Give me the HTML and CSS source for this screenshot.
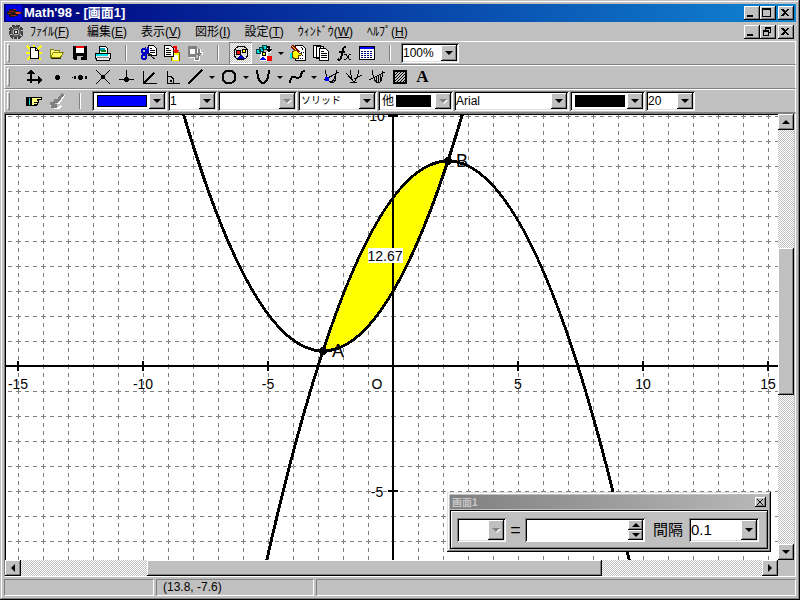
FILE: index.html
```
<!DOCTYPE html>
<html lang="ja">
  <head>
    <meta charset="UTF-8" />
    <meta name="viewport" content="width=device-width, initial-scale=1.0" />
    <title>Math'98 - [画面1]</title>
    <link rel="stylesheet" href="styles.css">
  </head>
  <body>
    <div class="window">
      <header class="titlebar">
        <svg class="logo" width="16" height="16" viewBox="0 0 16 16">
          <rect width="16" height="16" fill="#0000e0" />
          <path d="M1 6h2v-2h7v2h3v1h3v2h-4v2h-3v1h-6v-2h-2z" fill="#181818" />
          <path d="M3 6h5M2 8h3M5 10h5M7 4h3" stroke="#a02010" />
          <path d="M9 7h6M10 8h4" stroke="#e04020" />
        </svg>
        <h1>Math'98 - [画面1]</h1>
        <div class="winbtns">
          <button aria-label="最小化"><svg width="12" height="10"><path d="M2 7h6v2h-6z" /></svg></button>
          <button aria-label="最大化"><svg width="12" height="10"><path d="M1 0h9v9h-9zM2 2v6h7v-6z" fill-rule="evenodd" /></svg></button>
          <button class="close" aria-label="閉じる"><svg width="12" height="10"><path d="M2 1h2l2 2 2-2h2l-3 3.500 3 3.500h-2l-2-2-2 2h-2l3-3.500z" /></svg></button>
        </div>
      </header>

      <nav class="menubar">
        <svg class="gear" width="16" height="16" viewBox="0 0 16 16">
          <circle cx="8" cy="8" r="6" fill="none" stroke="#404040" stroke-width="3" stroke-dasharray="3 1" />
          <circle cx="8" cy="8" r="4" fill="#b0b0b0" stroke="#606060" stroke-width="2" />
          <circle cx="8" cy="8" r="2" fill="#e8e8e8" stroke="#303030" />
        </svg>
        <a href="#" class="file">ﾌｧｲﾙ(<u>F</u>)</a>
        <a href="#">編集(<u>E</u>)</a>
        <a href="#">表示(<u>V</u>)</a>
        <a href="#">図形(<u>I</u>)</a>
        <a href="#">設定(<u>T</u>)</a>
        <a href="#">ｳｨﾝﾄﾞｳ(<u>W</u>)</a>
        <a href="#">ﾍﾙﾌﾟ(<u>H</u>)</a>
        <div class="winbtns">
          <button aria-label="画面を最小化"><svg width="12" height="10"><path d="M2 7h6v2h-6z" /></svg></button>
          <button aria-label="元に戻す"><svg width="12" height="10"><path d="M4 0h6v6h-2v3h-6v-6h2zM5 2v1h3v2h1v-3zM3 5v3h4v-3z" fill-rule="evenodd" /></svg></button>
          <button class="close" aria-label="画面を閉じる"><svg width="12" height="10"><path d="M2 1h2l2 2 2-2h2l-3 3.500 3 3.500h-2l-2-2-2 2h-2l3-3.500z" /></svg></button>
        </div>
      </nav>

      <div class="toolbar">
        <span class="grip"></span>
        <button class="tool" aria-label="新規作成">
          <svg width="16" height="16" viewBox="0 0 16 16">
            <path d="M1 1l4 4M15 1l-4 4M1 15l4-4M15 15l-4-4M8 0v3M0 8h4M12 8h4" stroke="#ff0" stroke-width="2" />
            <path d="M4.500 2.500h5l3 3v8h-8z" fill="#fff" stroke="#000" /><path d="M9.500 2.500v3h3" fill="none" stroke="#000" />
          </svg>
        </button>
        <button class="tool" aria-label="開く">
          <svg width="16" height="16" viewBox="0 0 16 16">
            <path d="M1.500 12.500v-8h3l1 1h5v3" fill="#ffff80" stroke="#808000" />
            <path d="M1.500 12.500l3-5h10l-3 5z" fill="#ffff60" stroke="#808000" />
            <path d="M2 13h10" stroke="#202000" />
          </svg>
        </button>
        <button class="tool" aria-label="保存">
          <svg width="16" height="16" viewBox="0 0 16 16">
            <path d="M1 1h14v14h-13l-1-1z" />
            <path d="M4 1h8v7h-8z" fill="#fff" /><path d="M4 1h8v2h-8z" fill="#f00" /><path d="M5 11h6v4h-6z" fill="#c0c0c0" /><path d="M9 12h2v3h-2z" fill="#000" />
          </svg>
        </button>
        <button class="tool" aria-label="印刷">
          <svg width="16" height="16" viewBox="0 0 16 16">
            <path d="M4.500 1.500h6l2 2v5h-8z" fill="#fff" stroke="#000" />
            <path d="M5 3h5v3h-5z" fill="#00a0c0" /><path d="M6 5h5v2h-5z" fill="#008000" />
            <path d="M.5 8.500h15v5h-1v2h-13v-2h-1z" fill="#e8e8e8" stroke="#000" /><path d="M2 12h12" stroke="#808080" /><path d="M1 10h12" stroke="#00e0e0" stroke-width="2" />
          </svg>
        </button>
        <span class="sep"></span>
        <button class="tool" aria-label="切り取り">
          <svg width="16" height="16" viewBox="0 0 16 16">
            <path d="M7.500.5h5l3 3v7h-8z" fill="#fff" stroke="#000" />
            <path d="M9 3h2M9 5h5M9 7h5" stroke="#000" />
            <path d="M4 2l2 6 8 6M1 7h5l5 3" fill="none" stroke="#202020" />
            <circle cx="3" cy="6" r="2" fill="none" stroke="#0000c0" stroke-width="2" /><circle cx="3" cy="12" r="2" fill="none" stroke="#0000c0" stroke-width="2" />
            <path d="M4 10l3-3v-5" fill="none" stroke="#0000c0" stroke-width="2" />
          </svg>
        </button>
        <button class="tool" aria-label="コピー">
          <svg width="16" height="16" viewBox="0 0 16 16">
            <path d="M7 7h8v9h-8z" fill="#ff0" stroke="#806000" /><path d="M9 10h5v5h-5z" fill="#fff" />
            <path d="M.5.500h6l3 3v8h-9z" fill="#fff" stroke="#000" />
            <path d="M2 3h3M2 5h5M2 7h5M2 9h5" stroke="#000" />
            <path d="M9 1h4v4h2l-3 4-3-4h2v-2h-2z" fill="#f00" />
          </svg>
        </button>
        <button class="tool" aria-label="貼り付け" disabled>
          <svg width="16" height="16" viewBox="0 0 16 16">
            <path d="M2 2h8v2h4v3h2v3h-3v6h-6v-3h-5z" fill="#fff" />
            <path d="M1 1h9v11h-9zM3 4v5h5v-5z" fill="#808080" fill-rule="evenodd" />
            <path d="M8 8h3v-4h2v4h2l-3 4v3h-4z" fill="#808080" /><path d="M9 10h2v3h-2z" fill="#c0c0c0" />
          </svg>
        </button>
        <span class="sep"></span>
        <button class="tool pressed" aria-label="図形の選択">
          <svg width="16" height="16" viewBox="0 0 16 16">
            <circle cx="8" cy="8" r="7" fill="none" stroke="#000" />
            <path d="M3 5h4v4h-4z" fill="#f00" stroke="#000" /><circle cx="11" cy="6" r="2" fill="#ff0" stroke="#000" /><path d="M8 10l3 3h-6z" fill="#00f" stroke="#000080" />
          </svg>
        </button>
        <button class="tool" aria-label="図形の変更">
          <svg width="16" height="16" viewBox="0 0 16 16">
            <path d="M4 7h7v-4h4v5h-3v8h-8z" fill="#fff" />
            <path d="M.5 4.500h4v4h-4zM3.500 2.500h4v4h-4zM6.500.5h4v4h-4z" fill="#00e0e0" stroke="#004040" />
            <path d="M11 1h3v3h2l-3 4-3-4h2z" /><circle cx="8" cy="9" r="2" fill="#ff0" stroke="#000" />
            <path d="M7 11l3 4h-6z" fill="#00f" /><path d="M11 11h5v5h-5z" fill="#f00" />
          </svg>
        </button>
        <button class="more" aria-label="図形の変更メニュー"></button>
        <button class="tool" aria-label="プロパティ">
          <svg width="16" height="16" viewBox="0 0 16 16">
            <path d="M5.500.5h7l3 3v12h-10z" fill="#fff" stroke="#000" /><path d="M11 2l2 3M8 13h6M10 10h4M11 7h3" stroke="#000" stroke-dasharray="1 1" />
            <path d="M2 1l7 7" stroke="#800000" stroke-width="3" /><path d="M2 1l7 7" stroke="#ff0" />
            <path d="M2 7l4-2 3 3h2v2l-3 1v2l-3 1-3-2z" fill="#ff0" stroke="#604000" /><path d="M0 8h2v6h-2z" fill="#00e0e0" />
          </svg>
        </button>
        <button class="tool" aria-label="画面一覧">
          <svg width="16" height="16" viewBox="0 0 16 16">
            <path d="M.5.500h7v12h-7zM3.500 1.500h7v12h-7z" fill="#fff" stroke="#000" />
            <path d="M6.500 3.500h6l3 3v9h-9z" fill="#fff" stroke="#000" /><path d="M8 6.500h3M8 8.500h6M8 10.500h6M8 12.500h6" stroke="#000" />
          </svg>
        </button>
        <button class="tool" aria-label="関数">
          <svg width="16" height="16" viewBox="0 0 16 16">
            <path d="M10 3q-2-2-3 1l-2 9q-1 3-3 1M3 7h6" fill="none" stroke="#000" stroke-width="2" />
            <path d="M8 9h2l3 5h2M15 9h-1l-4 5h-2" fill="none" stroke="#000" />
          </svg>
        </button>
        <button class="tool" aria-label="表">
          <svg width="16" height="16" viewBox="0 0 16 16">
            <path d="M.5 1.500h15v13h-15z" fill="#fff" stroke="#000" /><path d="M1 2h14v2h-14z" fill="#00f" />
            <path d="M2 6.500h12M2 8.500h12M2 10.500h12M2 12.500h12" stroke="#000080" stroke-dasharray="2 1" />
          </svg>
        </button>
        <span class="sep"></span>
        <span class="combo zoom"><select aria-label="倍率"><option>100%</option></select><i class="drop"></i></span>
      </div>

      <div class="toolbar">
        <span class="grip"></span>
        <button class="tool" aria-label="座標軸"><svg width="16" height="16" viewBox="0 0 16 16"><path d="M5 3v11M1 11h12" stroke="#000" stroke-width="2" /><path d="M5 0l4 5h-8zM16 11l-4 4v-8z" /></svg></button>
        <button class="tool" aria-label="点"><svg width="16" height="16" viewBox="0 0 16 16"><path d="M7 6h3v1h1v3h-1v1h-3v-1h-1v-3h1z" /></svg></button>
        <button class="tool" aria-label="中点"><svg width="16" height="16" viewBox="0 0 16 16"><path d="M7 6h3v1h1v3h-1v1h-3v-1h-1v-3h1zM2 7h2v3h-2zM13 7h2v3h-2zM0 8h1v1h-1z" /></svg></button>
        <button class="tool" aria-label="交点"><svg width="16" height="16" viewBox="0 0 16 16"><path d="M1 1l14 14M15 1l-14 14" stroke="#000" /><path d="M6 6h4v4h-4z" /></svg></button>
        <button class="tool" aria-label="垂線"><svg width="16" height="16" viewBox="0 0 16 16"><path d="M8.500 1v10M1 10.500h15" stroke="#000" /><path d="M7 8h3v1h1v3h-1v1h-3v-1h-1v-3h1z" /></svg></button>
        <button class="tool" aria-label="角の二等分線"><svg width="16" height="16" viewBox="0 0 16 16"><path d="M2.500 2v12.500h13" fill="none" stroke="#000" /><path d="M3 14l10-10" stroke="#000" stroke-width="2" /></svg></button>
        <button class="tool" aria-label="角度"><svg width="16" height="16" viewBox="0 0 16 16"><path d="M3.500 2v12.500h13M4 7.500h3l2 2v4" fill="none" stroke="#000" /><path d="M6 11h2v2h-2z" /></svg></button>
        <button class="tool" aria-label="直線"><svg width="16" height="16" viewBox="0 0 16 16"><path d="M1 15l14-14" stroke="#000" stroke-width="2" /></svg></button>
        <button class="more" aria-label="直線メニュー"></button>
        <button class="tool" aria-label="円"><svg width="16" height="16" viewBox="0 0 16 16"><circle cx="8" cy="8" r="6.500" fill="none" stroke="#000" stroke-width="2" /></svg></button>
        <button class="more" aria-label="円メニュー"></button>
        <button class="tool" aria-label="放物線"><svg width="16" height="16" viewBox="0 0 16 16"><path d="M2 1q1 13 6 13t6-13" fill="none" stroke="#000" stroke-width="2" /></svg></button>
        <button class="more" aria-label="放物線メニュー"></button>
        <button class="tool" aria-label="曲線"><svg width="16" height="16" viewBox="0 0 16 16"><path d="M1 14q1-8 5-6t6-1q0-5 4-5" fill="none" stroke="#000" stroke-width="2" /></svg></button>
        <button class="more" aria-label="曲線メニュー"></button>
        <button class="tool" aria-label="接線"><svg width="16" height="16" viewBox="0 0 16 16"><path d="M2 1q3 12 6 12t6-12M1 11l15-8M7 13q6 2 6-6" fill="none" stroke="#000" /><path d="M2 8h4v4h-4z" fill="#00f" /></svg></button>
        <button class="tool" aria-label="法線"><svg width="16" height="16" viewBox="0 0 16 16"><path d="M4 1q2 12 4 12t5-12M0 4l8 9M8 10l8-4M4 13h7" fill="none" stroke="#000" /></svg></button>
        <button class="tool" aria-label="面積"><svg width="16" height="16" viewBox="0 0 16 16"><path d="M3 1q2 13 6 13t5-12M0 11l16-8M7 8v5M9 7v7M11 6v7" fill="none" stroke="#000" /></svg></button>
        <button class="tool" aria-label="領域"><svg width="16" height="16" viewBox="0 0 16 16"><path d="M2 2h12v12h-12z" fill="#c0c0c0" stroke="#000" stroke-width="2" /><path d="M3 6l3-3M3 9l6-6M3 12l9-9M5 13l8-8M8 13l5-5M11 13l2-2" stroke="#000" /></svg></button>
        <button class="tool letter" aria-label="文字">A</button>
      </div>

      <div class="toolbar">
        <span class="grip"></span>
        <button class="tool" aria-label="選択">
          <svg width="16" height="16" viewBox="0 0 16 16">
            <path d="M5 4.500h10v2h-4v1h1v2h-1v2h-1v1h-5z" fill="#ffff80" stroke="#000" /><path d="M8 9h3M8 11h2" stroke="#000" />
            <path d="M0 4h5v9h-5z" /><path d="M3 5h1v7h-1z" fill="#00e0e0" />
          </svg>
        </button>
        <button class="tool" aria-label="書式" disabled>
          <svg width="16" height="16" viewBox="0 0 16 16">
            <path d="M15 2l-6 9M5 15h5l2-2M1 12l3-2" stroke="#fff" stroke-width="2" fill="none" />
            <path d="M14 1l-7 9M7 6l-4 8" stroke="#808080" stroke-width="3" /><path d="M1 9h3v2h4v4h-6z" fill="#808080" />
          </svg>
        </button>
        <span class="sep"></span>
        <div class="combos">
          <span class="combo color"><select class="swatch blue" aria-label="線の色"><option>青</option></select><i class="drop"></i></span>
          <span class="combo number"><select aria-label="線の太さ"><option>1</option></select><i class="drop"></i></span>
          <span class="combo style"><select aria-label="線の種類" disabled><option></option></select><i class="drop off"></i></span>
          <span class="combo style"><select class="kana" aria-label="塗り方"><option>ソリッド</option></select><i class="drop"></i></span>
          <span class="combo color"><select class="other" aria-label="塗り色"><option>他</option></select><i class="drop off"></i></span>
          <span class="combo font"><select aria-label="フォント"><option>Arial</option></select><i class="drop"></i></span>
          <span class="combo color"><select class="swatch" aria-label="文字の色"><option>黒</option></select><i class="drop"></i></span>
          <span class="combo number"><select aria-label="文字の大きさ"><option>20</option></select><i class="drop"></i></span>
        </div>
      </div>

      <main class="workspace">
        <div class="plot">
          <svg class="graph" width="100%" height="100%">
            <defs>
              <pattern id="grid" y="-11" width="25" height="25" patternUnits="userSpaceOnUse">
                <path d="M2 12h4v1h-4zM10 12h5v1h-5zM19 12h4v1h-4zM12 2h1v4h-1zM12 10h1v5h-1zM12 19h1v4h-1z" fill="#808080" />
              </pattern>
            </defs>
            <rect width="100%" height="100%" fill="url(#grid)" />
            <g transform="translate(387 251)">
              <path class="area" d="M-70 -15Q-7.500 -15 55 -205Q-7.500 -205 -70 -15z" />
              <path class="axis" d="M-387 0h2000M0 -251v2000" />
              <path class="axis" d="M-375 -5v10M-250 -5v10M-125 -5v10M125 -5v10M250 -5v10M375 -5v10M-5 125h10M-5 -250h10" />
              <!-- y = 0.304(x + 2.8)^2 + 0.6 and y = -0.304(x - 2.2)^2 + 8.2, 25px per unit -->
              <path class="curve" d="M-220 -289Q-70 259 80 -289" />
              <path class="curve" d="M-145 281Q55 -691 255 281" />
              <circle cx="-70" cy="-15" r="4" />
              <circle cx="55" cy="-205" r="4" />
              <g class="ticks">
                <text x="-375" y="23">-15</text>
                <text x="-250" y="23">-10</text>
                <text x="-125" y="23">-5</text>
                <text x="-16" y="23">O</text>
                <text x="125" y="23">5</text>
                <text x="250" y="23">10</text>
                <text x="375" y="23">15</text>
                <text x="-16" y="-245">10</text>
                <text x="-16" y="131">-5</text>
              </g>
              <rect x="-25" y="-118" width="35" height="15" fill="#fff" />
              <text class="value" x="-8" y="-105">12.67</text>
              <text class="point" x="-61" y="-9">A</text>
              <text class="point" x="63" y="-199">B</text>
            </g>
          </svg>

          <section class="palette">
            <div class="palette-title">
              <h2>画面1</h2>
              <button aria-label="パレットを閉じる"><svg width="8" height="8"><path d="M1 1l6 6M7 1l-6 6" stroke="#000" /></svg></button>
            </div>
            <div class="palette-body">
              <span class="combo variable"><select aria-label="変数" disabled><option></option></select><i class="drop off"></i></span>
              <span class="equals">=</span>
              <span class="spin">
                <input type="text" aria-label="値">
                <span class="spinbtns"><button class="up" aria-label="増やす"></button><button class="down" aria-label="減らす"></button></span>
              </span>
              <label for="step">間隔</label>
              <span class="combo step"><select id="step"><option>0.1</option></select><i class="drop"></i></span>
            </div>
          </section>
        </div>
        <div class="scroll vertical">
          <button class="up" aria-label="上へ"></button>
          <div class="track"><div class="thumb"></div></div>
          <button class="down" aria-label="下へ"></button>
        </div>
        <div class="scroll horizontal">
          <button class="left" aria-label="左へ"></button>
          <div class="track"><div class="thumb"></div></div>
          <button class="right" aria-label="右へ"></button>
        </div>
      </main>

      <footer class="statusbar">
        <span></span>
        <span>(13.8, -7.6)</span>
        <span></span>
      </footer>
    </div>
  </body>
</html>
```
FILE: styles.css
```
* {
  box-sizing: border-box;
}

body {
  margin: 0;
  font-family: "Liberation Sans", "Noto Sans CJK JP", sans-serif;
  font-size: 12px;
  line-height: 16px;
  color: #000;
}

button,
select,
input {
  font: inherit;
  color: #000;
  margin: 0;
  padding: 0;
  border: none;
  border-radius: 0;
  background: none;
}

svg {
  display: block;
  shape-rendering: crispEdges;
}

.window {
  display: flex;
  flex-direction: column;
  height: 100vh;
  padding: 4px;
  background-color: #c0c0c0;
  box-shadow: inset -1px -1px #000, inset 1px 1px #c0c0c0,
    inset -2px -2px #808080, inset 2px 2px #fff;
}

/* title and menu */

.titlebar {
  display: flex;
  align-items: center;
  flex: none;
  height: 18px;
  padding: 0 2px;
  background: linear-gradient(to right, #000080, #1084d0);
  color: #fff;
}

h1 {
  margin: 0 0 0 2px;
  font-size: 13px;
  line-height: 18px;
}

.winbtns {
  display: flex;
  margin-left: auto;
}

.winbtns button {
  width: 16px;
  height: 14px;
  padding: 1px;
}

.winbtns .close {
  margin-left: 2px;
}

.winbtns button,
.scroll button,
.thumb,
.drop,
.spinbtns button,
.palette-title button {
  background-color: #c0c0c0;
  box-shadow: inset -1px -1px #000, inset 1px 1px #fff,
    inset -2px -2px #808080;
}

.menubar {
  display: flex;
  align-items: center;
  flex: none;
  gap: 14px;
  height: 19px;
  padding: 0 2px 0 4px;
}

.gear {
  margin-right: -8px;
}

.menubar a {
  color: #000;
  text-decoration: none;
  white-space: nowrap;
}

.menubar .file {
  min-width: 43px;
}

/* toolbars */

.toolbar {
  display: flex;
  align-items: center;
  flex: none;
  height: 24px;
  padding: 0 2px;
  border: 1px solid;
  border-color: #fff #fff #808080;
}

.grip {
  width: 3px;
  height: 18px;
  margin-right: 12px;
  border: 1px solid;
  border-color: #fff #808080 #808080 #fff;
}

.tool {
  display: flex;
  align-items: center;
  justify-content: center;
  width: 23px;
  height: 22px;
}

.pressed {
  background: repeating-conic-gradient(#fff 0 25%, #c0c0c0 0 50%) 0 0 / 2px 2px;
  box-shadow: inset 1px 1px #808080, inset -1px -1px #fff;
}

.letter {
  font-family: "Liberation Serif", serif;
  font-size: 17px;
  font-weight: bold;
}

.sep {
  width: 2px;
  height: 16px;
  margin: 0 10px 0 11px;
  border-left: 1px solid #808080;
  border-right: 1px solid #fff;
}

.more {
  display: flex;
  align-items: center;
  justify-content: center;
  width: 11px;
  height: 22px;
}

.more::before {
  content: "";
  border: solid transparent;
  border-width: 3px 3px 0;
  border-top-color: #000;
}

.combos {
  display: flex;
  gap: 1px;
  margin-left: 1px;
}

.combo {
  display: flex;
  height: 20px;
  padding: 2px;
  background-color: #fff;
  box-shadow: inset 1px 1px #808080, inset -1px -1px #fff,
    inset 2px 2px #000, inset -2px -2px #dfdfdf;
}

.combo select {
  flex: 1;
  min-width: 0;
  appearance: none;
  opacity: 1;
}

.drop {
  display: flex;
  align-items: center;
  justify-content: center;
  flex: none;
  width: 16px;
}

.drop::before {
  content: "";
  border: solid transparent;
  border-width: 4px 4px 0;
  border-top-color: #000;
}

.off::before {
  border-top-color: #808080;
  filter: drop-shadow(1px 1px #fff);
}

.zoom {
  width: 58px;
}

.color {
  width: 75px;
}

.number {
  width: 49px;
}

.style {
  width: 79px;
}

.font {
  width: 115px;
}

.combo .kana {
  padding-left: 1px;
  font-size: 10px;
}

.combo .swatch {
  color: transparent;
  background: linear-gradient(#000, #000) center / 50px 12px no-repeat;
}

.combo .blue {
  background: linear-gradient(#00f, #00f) center / 48px 10px no-repeat,
    linear-gradient(#000, #000) center / 50px 12px no-repeat;
}

.combo .other {
  padding-left: 2px;
  background: linear-gradient(#000, #000) right 4px center / 35px 12px no-repeat;
}

/* drawing area */

.workspace {
  display: grid;
  grid-template-columns: 1fr 16px;
  grid-template-rows: 1fr 16px;
  flex: 1;
  min-height: 0;
  padding-right: 1px;
  border: 1px solid;
  border-color: #808080 #fff #fff #808080;
}

.plot {
  position: relative;
  min-width: 0;
  min-height: 0;
  overflow: hidden;
  border: solid #000;
  border-width: 1px 0 0 1px;
  background-color: #fff;
}

.graph {
  position: absolute;
}

.area {
  fill: #ff0;
}

.axis,
.curve {
  fill: none;
  stroke: #000;
  stroke-width: 2px;
}

.curve {
  stroke-width: 3px;
}

.ticks,
.value {
  font-size: 14px;
  text-anchor: middle;
}

.point {
  font-size: 18px;
}

.scroll {
  display: flex;
}

.scroll button {
  display: flex;
  align-items: center;
  justify-content: center;
  flex: none;
  width: 16px;
  height: 16px;
}

.up::before,
.down::before,
.left::before,
.right::before {
  content: "";
  border: 4px solid transparent;
}

.up::before {
  border-top: none;
  border-bottom-color: #000;
}

.down::before {
  border-bottom: none;
  border-top-color: #000;
}

.left::before {
  border-left: none;
  border-right-color: #000;
}

.right::before {
  border-right: none;
  border-left-color: #000;
}

.vertical {
  flex-direction: column;
}

.track {
  display: grid;
  flex: 1;
  background: repeating-conic-gradient(#fff 0 25%, #c0c0c0 0 50%) 0 0 / 2px 2px;
}

.vertical .track {
  grid-template-rows: 118fr 146fr 149fr;
}

.vertical .thumb {
  grid-row: 2;
}

.horizontal .track {
  grid-template-columns: 126fr 454fr 160fr;
}

.horizontal .thumb {
  grid-column: 2;
}

/* floating palette */

.palette {
  position: absolute;
  right: 7px;
  bottom: 8px;
  width: 324px;
  padding: 3px;
  background-color: #c0c0c0;
  box-shadow: inset -1px -1px #000, inset 1px 1px #dfdfdf,
    inset -2px -2px #808080, inset 2px 2px #fff;
}

.palette-title {
  display: flex;
  align-items: center;
  justify-content: space-between;
  height: 14px;
  padding: 0 2px;
  background: linear-gradient(to right, #808080, #b8b8b8);
}

h2 {
  margin: 0;
  font-size: 10px;
  line-height: 13px;
  color: #c8c8c8;
}

.palette-title button {
  width: 11px;
  height: 10px;
  padding: 1px;
}

.palette-body {
  display: flex;
  align-items: center;
  height: 39px;
  margin-top: 1px;
  padding: 0 8px 0 6px;
  border: 1px solid #000;
  box-shadow: inset 1px 1px #fff, inset -1px -1px #808080;
  font-size: 15px;
}

.palette-body .combo,
.spin {
  height: 24px;
}

.variable {
  width: 49px;
}

.equals {
  width: 19px;
  text-align: center;
  font-size: 18px;
}

.spin {
  display: flex;
  width: 120px;
  padding: 2px;
  background-color: #fff;
  box-shadow: inset 1px 1px #808080, inset -1px -1px #fff,
    inset 2px 2px #000;
}

.spin input {
  flex: 1;
  min-width: 0;
  outline: none;
}

.spinbtns {
  display: flex;
  flex-direction: column;
  width: 15px;
}

.spinbtns button {
  display: flex;
  align-items: center;
  justify-content: center;
  flex: 1;
}

.palette-body label {
  margin: 0 6px 0 8px;
}

.step {
  flex: 1;
}

/* status bar */

.statusbar {
  display: grid;
  grid-template-columns: 150px 158px 1fr;
  flex: none;
  gap: 2px;
  height: 19px;
  padding-top: 2px;
}

.statusbar span {
  padding: 0 6px;
  border: 1px solid;
  border-color: #808080 #fff #fff #808080;
  line-height: 15px;
}
```
